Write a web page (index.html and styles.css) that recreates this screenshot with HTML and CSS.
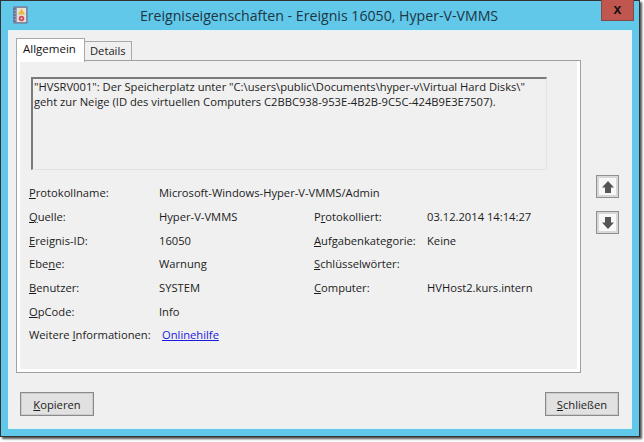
FILE: index.html
```html
<!DOCTYPE html>
<html lang="de">
<head>
    <meta charset="UTF-8">
    <title>Ereigniseigenschaften</title>
    <link rel="stylesheet" href="styles.css">
</head>
<body>
    <div class="window">
        <div class="titlebar">
            <svg class="app-icon" width="16" height="18" viewBox="0 0 16 18">
                <rect x="2" y="1" width="13" height="16" fill="#9aa0b8" stroke="#6f6f88"/>
                <rect x="5" y="2" width="9" height="14" fill="#e6e2da"/>
                <path d="M1 3h3M1 6h3M1 9h3M1 12h3M1 15h3" stroke="#55607a"/>
                <path d="M9.500 2.500l3.500 6h-7z" fill="#e8b93a"/>
                <circle cx="9.500" cy="12.500" r="2.800" fill="#cf4a5c"/>
                <circle cx="9.500" cy="12.500" r="1" fill="#f0d0d0"/>
            </svg>
            <span class="title">Ereigniseigenschaften - Ereignis 16050, Hyper-V-VMMS</span>
            <div class="close"><span>x</span></div>
        </div>
        <div class="client">
            <div class="main">
                <div class="left">
                    <div class="tabs">
                        <div class="tab active">Allgemein</div>
                        <div class="tab">Details</div>
                    </div>
                    <div class="panel">
                        <div class="message">"HVSRV001": Der Speicherplatz unter "C:\users\public\Documents\hyper-v\Virtual Hard Disks\" geht zur Neige (ID des virtuellen Computers C2BBC938-953E-4B2B-9C5C-424B9E3E7507).</div>
                        <div class="fields">
                            <span class="label"><u>P</u>rotokollname:</span>
                            <span class="wide">Microsoft-Windows-Hyper-V-VMMS/Admin</span>

                            <span class="label"><u>Q</u>uelle:</span>
                            <span>Hyper-V-VMMS</span>
                            <span class="label">P<u>r</u>otokolliert:</span>
                            <span>03.12.2014 14:14:27</span>

                            <span class="label"><u>E</u>reignis-ID:</span>
                            <span>16050</span>
                            <span class="label"><u>A</u>ufgabenkategorie:</span>
                            <span>Keine</span>

                            <span class="label">Ebe<u>n</u>e:</span>
                            <span>Warnung</span>
                            <span class="label"><u>S</u>chlüsselwörter:</span>
                            <span></span>

                            <span class="label"><u>B</u>enutzer:</span>
                            <span>SYSTEM</span>
                            <span class="label"><u>C</u>omputer:</span>
                            <span>HVHost2.kurs.intern</span>

                            <span class="label"><u>O</u>pCode:</span>
                            <span class="wide">Info</span>

                            <span class="label">Weitere <u>I</u>nformationen:</span>
                            <a class="wide help" href="#">Onlinehilfe</a>
                        </div>
                    </div>
                </div>
                <div class="arrows">
                    <button class="arrow">
                        <svg width="14" height="14" viewBox="0 0 14 14"><path d="M7 1l6 6.500h-3v5.500h-6v-5.500h-3z" fill="#555"/></svg>
                    </button>
                    <button class="arrow">
                        <svg width="14" height="14" viewBox="0 0 14 14"><path d="M7 13l6-6.500h-3v-5.500h-6v5.500h-3z" fill="#555"/></svg>
                    </button>
                </div>
            </div>
            <div class="actions">
                <button class="btn"><u>K</u>opieren</button>
                <button class="btn"><u>S</u>chließen</button>
            </div>
        </div>
    </div>
</body>
</html>
```

FILE: styles.css
```css
html, body { margin: 0; padding: 0; background: #fff; }
body { width: 644px; height: 442px; overflow: hidden; font-family: "Open Sans", sans-serif; font-size: 11.2px; color: #1c1c1c; }
.window { width: 640px; height: 437px; box-sizing: border-box; background: #62c8ea; border: 1px solid #333; box-shadow: 2px 2px 2px #555; display: flex; flex-direction: column; padding: 0 7px 7px; }
.titlebar { height: 29px; flex: none; display: flex; align-items: center; position: relative; }
.app-icon { margin-left: 4px; margin-top: -2px; }
.title { flex: 1; text-align: center; font-size: 14.15px; color: #1c3644; padding-right: 22px; }
.close { position: absolute; top: -1px; right: -2px; width: 33px; height: 21px; box-sizing: border-box; background: #c0564f; border: 1px solid #7f4a48; border-top: none; color: #111; font: bold 14px "Liberation Sans", sans-serif; display: flex; align-items: center; justify-content: center; }
.close span { margin-top: -3px; }
.client { flex: 1; background: #f0f0f0; border: 1px solid #e4f3f9; display: flex; flex-direction: column; padding: 6px 12px 12px 7px; }
.main { flex: 1; display: flex; }
.left { width: 565px; display: flex; flex-direction: column; }
.tabs { display: flex; align-items: flex-end; height: 23px; position: relative; z-index: 1; }
.tab { height: 18px; padding: 0 5px; line-height: 17px; background: #f0f0f0; border: 1px solid #a9a9a9; border-bottom: none; margin-left: -1px; }
.tab.active { height: 23px; width: 55px; padding: 0 6px; line-height: 19px; margin-left: 0; background: #fff; border-bottom: none; margin-bottom: -2px; color: #111; font-size: 11.5px; }
.panel { height: 313px; box-sizing: border-box; background: #f0f0f0; border: 1px solid #a0a0a0; box-shadow: inset 3px 0 #fff, inset -3px 0 #fff, inset 0 -3px #fff; padding: 16px 14px; }
.message { width: 516px; height: 93px; box-sizing: border-box; border: 1px solid #e3e3e3; border-top: 2px solid #7a7a7a; border-left: 2px solid #7a7a7a; padding: 0 1px; line-height: 15px; }
.fields { display: grid; grid-template-columns: 130px 155px 113px 1fr; grid-auto-rows: 23.7px; align-items: center; margin: 11px 0 0 -2px; }
.wide { grid-column: 2 / span 3; }
.help { color: #1a1ae0; padding-left: 3px; }
.arrows { display: flex; flex-direction: column; gap: 13px; margin-left: 15px; padding-top: 138px; }
.arrow { width: 23px; height: 23px; padding: 0; background: #f8f8f8; border: 1px solid #8f8f8f; outline: 2px solid #d8d8d8; outline-offset: -3px; display: flex; align-items: center; justify-content: center; }
.actions { display: flex; justify-content: space-between; flex: none; padding-left: 4px; }
.btn { width: 74px; height: 24px; padding: 0; font: inherit; color: #1c1c1c; background: #e1e1e1; border: 1px solid #8a8a8a; outline: 1px solid #ccc; outline-offset: -2px; }
```
